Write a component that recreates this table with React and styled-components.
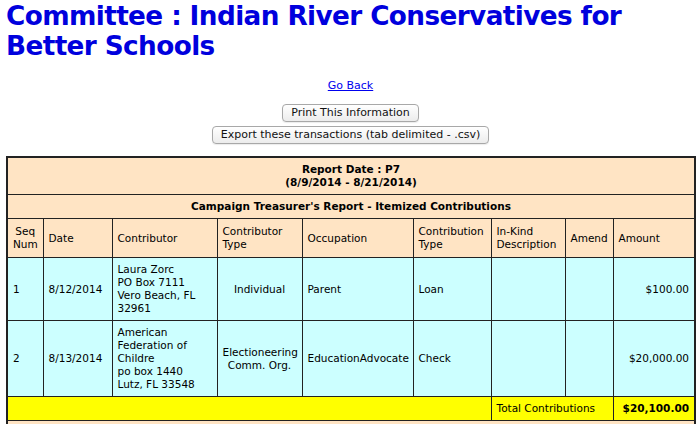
import React from 'react';
import styled, { createGlobalStyle } from 'styled-components';

const GlobalStyle = createGlobalStyle`
  body {
    margin: 0;
    padding: 0 5px 0 6px;
    background: #ffffff;
    font-family: "DejaVu Sans", Verdana, sans-serif;
  }
`;

const Title = styled.h1`
  margin: 0;
  padding-top: 1px;
  font-family: "DejaVu Sans", Tahoma, sans-serif;
  font-size: 26.3px;
  line-height: 30px;
  font-weight: bold;
  color: #0000dd;
  letter-spacing: -0.6px;
`;

const Actions = styled.div`
  display: flex;
  flex-direction: column;
  align-items: center;
  padding-top: 18px;
  gap: 4px;
`;

const BackLink = styled.a`
  font-size: 11px;
  line-height: 13px;
  color: #0000ee;
  text-decoration: underline;
  margin-bottom: 8px;
`;

const MacButton = styled.button`
  font-family: "DejaVu Sans", "Lucida Grande", sans-serif;
  font-size: 11px;
  line-height: 14px;
  height: 18px;
  padding: 0 8px;
  color: #111;
  background: linear-gradient(#ffffff, #ececec);
  border: 1px solid #a8a8a8;
  border-radius: 4px;
  box-shadow: 0 1px 1px rgba(0, 0, 0, 0.08);
`;

const Report = styled.table`
  margin-top: 12px;
  width: 688px;
  border-collapse: collapse;
  border: 2px solid #222;
  font-size: 10.5px;
  line-height: 13px;
  color: #000;
  table-layout: fixed;
`;

const Cell = styled.td`
  border: 1px solid #222;
  padding: ${(p) => p.$pad || '5px 5px'};
  background: ${(p) => p.$bg || '#ccffff'};
  text-align: ${(p) => p.$align || 'left'};
  font-weight: ${(p) => (p.$bold ? 'bold' : 'normal')};
  vertical-align: middle;
`;

const peach = '#ffe4c4';
const cyan = '#ccffff';
const yellow = '#ffff00';

const widths = [36, 69, 105, 85, 111, 78, 74, 48, 82];

const headers = [
  { label: <>Seq<br />Num</>, align: 'center' },
  { label: 'Date' },
  { label: 'Contributor' },
  { label: <>Contributor<br />Type</> },
  { label: 'Occupation' },
  { label: <>Contribution<br />Type</> },
  { label: <>In-Kind<br />Description</> },
  { label: 'Amend' },
  { label: 'Amount' },
];

const rows = [
  {
    seq: '1',
    date: '8/12/2014',
    contributor: ['Laura Zorc', 'PO Box 7111', 'Vero Beach, FL', '32961'],
    type: ['Individual'],
    occupation: 'Parent',
    contribType: 'Loan',
    amount: '$100.00',
  },
  {
    seq: '2',
    date: '8/13/2014',
    contributor: ['American', 'Federation of', 'Childre', 'po box 1440', 'Lutz, FL 33548'],
    type: ['Electioneering', 'Comm. Org.'],
    occupation: 'EducationAdvocate',
    contribType: 'Check',
    amount: '$20,000.00',
  },
];

const lines = (list) =>
  list.map((l, i) => (
    <React.Fragment key={i}>
      {i > 0 && <br />}
      {l}
    </React.Fragment>
  ));

function App() {
  return (
    <>
      <GlobalStyle />
      <Title>
        Committee : Indian River Conservatives for
        <br />
        Better Schools
      </Title>
      <Actions>
        <BackLink href="#">Go Back</BackLink>
        <MacButton>Print This Information</MacButton>
        <MacButton>Export these transactions (tab delimited - .csv)</MacButton>
      </Actions>
      <Report>
        <colgroup>
          {widths.map((w, i) => (
            <col key={i} style={{ width: w }} />
          ))}
        </colgroup>
        <tbody>
          <tr>
            <Cell colSpan={9} $bg={peach} $align="center" $bold $pad="5px 5px">
              Report Date : P7
              <br />
              (8/9/2014 - 8/21/2014)
            </Cell>
          </tr>
          <tr>
            <Cell colSpan={9} $bg={peach} $align="center" $bold $pad="5px 5px">
              Campaign Treasurer's Report - Itemized Contributions
            </Cell>
          </tr>
          <tr>
            {headers.map((h, i) => (
              <Cell key={i} $bg={peach} $align={h.align} $pad="6px 5px">
                {h.label}
              </Cell>
            ))}
          </tr>
          {rows.map((r) => (
            <tr key={r.seq}>
              <Cell $bg={cyan}>{r.seq}</Cell>
              <Cell $bg={cyan}>{r.date}</Cell>
              <Cell $bg={cyan}>{lines(r.contributor)}</Cell>
              <Cell $bg={cyan} $align="center">{lines(r.type)}</Cell>
              <Cell $bg={cyan}>{r.occupation}</Cell>
              <Cell $bg={cyan}>{r.contribType}</Cell>
              <Cell $bg={cyan} />
              <Cell $bg={cyan} />
              <Cell $bg={cyan} $align="right">{r.amount}</Cell>
            </tr>
          ))}
          <tr>
            <Cell colSpan={6} $bg={yellow} />
            <Cell colSpan={2} $bg={yellow}>Total Contributions</Cell>
            <Cell $bg={yellow} $align="right" $bold>$20,100.00</Cell>
          </tr>
          <tr>
            <Cell colSpan={9} $bg={peach}>&nbsp;</Cell>
          </tr>
        </tbody>
      </Report>
    </>
  );
}

export default App;
